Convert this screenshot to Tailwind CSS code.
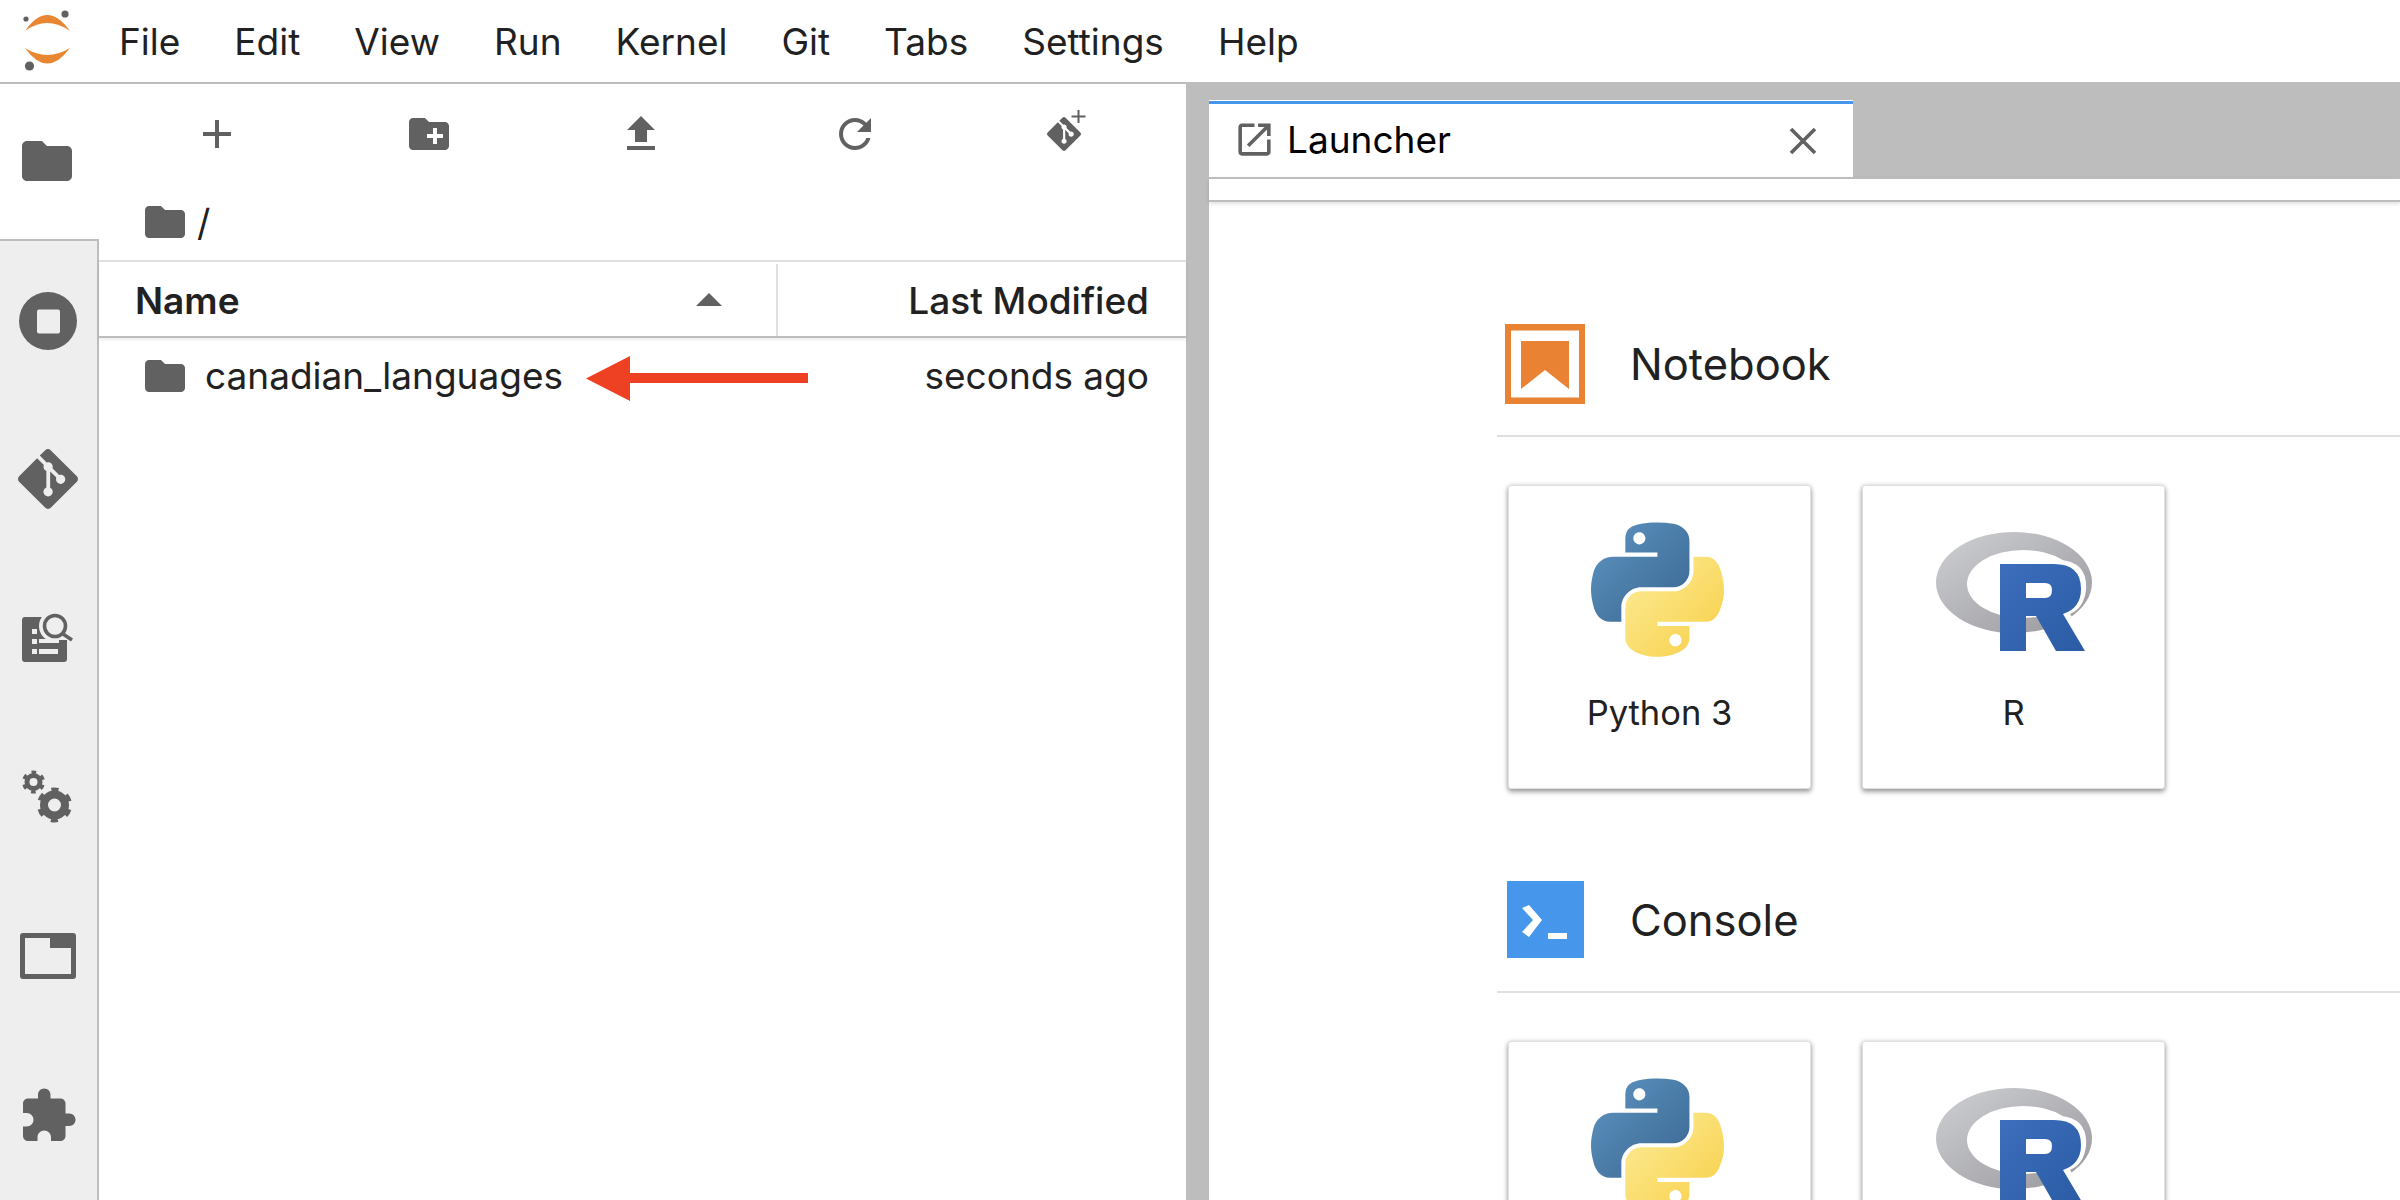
<!doctype html>
<html>
<head>
  <meta charset="UTF-8">
  <script src="https://cdn.jsdelivr.net/npm/@tailwindcss/browser@4"></script>
</head>
<body class="w-[2400px] h-[1200px] overflow-hidden bg-white text-[#212121] font-['Inter',sans-serif]">
  <svg class="absolute w-0 h-0">
    <defs>
      <linearGradient id="py-blue" x1="0" y1="0" x2="1" y2="1"><stop offset="0" stop-color="#5f94c2"/><stop offset="1" stop-color="#386690"/></linearGradient>
      <linearGradient id="py-yellow" x1="0" y1="0" x2="1" y2="1"><stop offset="0" stop-color="#fcec9a"/><stop offset="1" stop-color="#f8cf45"/></linearGradient>
      <linearGradient id="r-ring" x1="0" y1="0" x2="1" y2="1"><stop offset="0" stop-color="#cfd0d3"/><stop offset="1" stop-color="#97979c"/></linearGradient>
      <linearGradient id="r-letter" x1="0" y1="0" x2="1" y2="1"><stop offset="0" stop-color="#3c6ebd"/><stop offset="1" stop-color="#2a5ba3"/></linearGradient>
      <symbol id="py-logo" viewBox="0 0 112 113">
        <path fill="url(#py-blue)" fill-rule="evenodd" d="M54.92 0C50.34.02 45.96.41 42.11 1.09 30.76 3.1 28.7 7.29 28.7 15.03V25.25H55.51V28.66H18.64C10.85 28.66 4.02 33.34 1.89 42.25-.57 52.46-.68 58.84 1.89 69.5 3.79 77.44 8.35 83.09 16.14 83.09H25.36V70.84C25.36 61.99 33.01 54.19 42.11 54.19H68.89C76.34 54.19 82.29 48.05 82.29 40.56V15.03C82.29 7.77 76.16 2.31 68.89 1.09 64.28.33 59.5-.02 54.92 0ZM40.42 8.22C43.19 8.22 45.45 10.52 45.45 13.34 45.45 16.16 43.19 18.44 40.42 18.44 37.64 18.44 35.39 16.16 35.39 13.34 35.39 10.52 37.64 8.22 40.42 8.22Z"/>
        <path fill="url(#py-yellow)" fill-rule="evenodd" d="M85.64 28.66V40.56C85.64 49.79 77.81 57.56 68.89 57.56H42.11C34.77 57.56 28.7 63.84 28.7 71.19V96.72C28.7 103.99 35.02 108.26 42.11 110.34 50.59 112.84 58.73 113.29 68.89 110.34 75.64 108.39 82.29 104.46 82.29 96.72V86.5H55.51V83.09H95.7C103.49 83.09 106.4 77.66 109.11 69.5 111.91 61.1 111.79 53.03 109.11 42.25 107.18 34.49 103.5 28.66 95.7 28.66ZM70.58 93.31C73.35 93.31 75.61 95.59 75.61 98.41 75.61 101.23 73.35 103.53 70.58 103.53 67.81 103.53 65.54 101.23 65.54 98.41 65.54 95.59 67.81 93.31 70.58 93.31Z"/>
      </symbol>
      <symbol id="r-logo" viewBox="0 0 156 119">
        <path fill="url(#r-ring)" fill-rule="evenodd" d="M0 50.5A78 50.5 0 1 0 156 50.5 78 50.5 0 1 0 0 50.5ZM31 52A56 34 0 1 1 143 52 56 34 0 1 1 31 52Z"/>
        <path fill="#fff" d="M90 28H124Q152 30 150 58 148 76 134 82L150 104H120L100 84H90Z"/>
        <path fill="url(#r-letter)" fill-rule="evenodd" d="M64 32H118Q145 32 145 57 145 76 127 82L149 119H120L100 84H90V119H64ZM90 51V66H109Q116 66 116 58 116 51 109 51Z"/>
      </symbol>
      <symbol id="folder" viewBox="0 0 24 24"><path d="M10 4H4c-1.1 0-1.99.9-1.99 2L2 18c0 1.1.9 2 2 2h16c1.1 0 2-.9 2-2V8c0-1.1-.9-2-2-2h-8l-2-2z"/></symbol>
      <symbol id="git" viewBox="0 0 24 24"><path d="M23.546 10.93L13.067.452c-.604-.603-1.582-.603-2.188 0L8.708 2.627l2.76 2.76c.645-.215 1.379-.07 1.889.441.516.515.658 1.258.438 1.9l2.658 2.66c.645-.223 1.387-.078 1.9.435.721.72.721 1.884 0 2.604-.719.719-1.881.719-2.6 0-.539-.541-.674-1.337-.404-1.996L12.86 8.955v6.525c.176.086.342.203.488.348.713.721.713 1.883 0 2.6-.719.721-1.889.721-2.609 0-.719-.719-.719-1.879 0-2.598.182-.18.387-.316.605-.406V8.835c-.217-.091-.424-.222-.6-.401-.545-.545-.676-1.342-.396-2.009L7.636 3.7.45 10.881c-.6.605-.6 1.584 0 2.189l10.48 10.477c.604.604 1.582.604 2.186 0l10.43-10.43c.605-.603.605-1.582 0-2.187"/></symbol>
    </defs>
  </svg>

  <!-- menu bar -->
  <header class="h-[84px] border-b-2 border-[#bdbdbd] flex items-center">
    <div class="w-[92px] h-[82px] shrink-0">
      <svg width="92" height="82" viewBox="0 0 92 82">
        <path fill="#e98632" d="M25 31Q47 -1 70 31 47 15 25 31Z"/>
        <path fill="#e98632" d="M25 48Q47 62 70 48 47 79 25 48Z"/>
        <circle cx="65" cy="14" r="3.6" fill="#616161"/>
        <circle cx="26" cy="19" r="2.6" fill="#616161"/>
        <circle cx="29.5" cy="66" r="4.6" fill="#616161"/>
      </svg>
    </div>
    <nav class="flex text-[37px] leading-none">
      <span class="px-[27px]">File</span>
      <span class="px-[27px]">Edit</span>
      <span class="px-[27px]">View</span>
      <span class="px-[27px]">Run</span>
      <span class="px-[27px]">Kernel</span>
      <span class="px-[27px]">Git</span>
      <span class="px-[27px]">Tabs</span>
      <span class="px-[27px]">Settings</span>
      <span class="px-[27px]">Help</span>
    </nav>
  </header>

  <main class="flex h-[1116px] overflow-hidden">
    <!-- activity bar -->
    <aside class="w-[99px] shrink-0 flex flex-col">
      <div class="h-[155px] shrink-0 flex items-center justify-center bg-white border-b-2 border-[#bdbdbd] box-content">
        <svg class="w-[60px] h-[60px] mr-[5px] mt-[-2px] fill-[#616161]"><use href="#folder"/></svg>
      </div>
      <div class="flex-1 bg-[#eeeeee] border-r-2 border-[#bdbdbd] flex flex-col">
        <div class="h-[160px] flex items-center justify-center">
          <svg width="58" height="58" viewBox="0 0 58 58" class="mr-[2px] mt-[-1px]"><circle cx="29" cy="29" r="29" fill="#616161"/><rect x="18" y="17.5" width="23" height="24" rx="2" fill="#eeeeee"/></svg>
        </div>
        <div class="h-[159px] flex items-center justify-center">
          <svg class="w-[60px] h-[60px] mr-[2px] mt-[-3px] fill-[#616161]"><use href="#git"/></svg>
        </div>
        <div class="h-[159px] flex items-center justify-center">
          <svg width="51" height="50" viewBox="0 0 51 50" class="mr-[2px] mt-[-5px]">
            <rect x="0" y="5" width="45" height="45" rx="3" fill="#616161"/>
            <circle cx="33" cy="14" r="16" fill="#eeeeee"/>
            <rect x="37" y="24" width="14" height="9" fill="#eeeeee"/>
            <path d="M36 28 H45 V33 H36Z" fill="#616161"/>
            <circle cx="33" cy="14" r="10.5" fill="none" stroke="#616161" stroke-width="3.6"/>
            <path d="M41 22L50 28" stroke="#616161" stroke-width="3.6" fill="none"/>
            <path d="M10 17h5v5h-5zM10 27h5v5h-5zM10 37h5v5h-5zM17 27h20v4H17zM17 37h19v5H17z" fill="#eeeeee"/>
          </svg>
        </div>
        <div class="h-[159px] flex items-center justify-center">
          <svg width="52" height="54" viewBox="0 0 52 54" fill="none" stroke="#616161" class="mr-[2px] mt-[-4px]">
            <circle cx="11.5" cy="12" r="6.5" stroke-width="5"/>
            <circle cx="11.5" cy="12" r="9.7" stroke-width="3.6" stroke-dasharray="4.6 5.56" stroke-dashoffset="-2.8"/>
            <circle cx="32.5" cy="35" r="10.5" stroke-width="8"/>
            <circle cx="32.5" cy="35" r="15" stroke-width="5" stroke-dasharray="7 8.7" stroke-dashoffset="-4.35"/>
          </svg>
        </div>
        <div class="h-[159px] flex items-center justify-center">
          <svg width="56" height="46" viewBox="0 0 56 46" class="mr-[2px] mt-[-4px]"><path fill="#616161" fill-rule="evenodd" d="M3 0H53Q56 0 56 3V43Q56 46 53 46H3Q0 46 0 43V3Q0 0 3 0ZM5 5V41H51V15H30V5Z"/></svg>
        </div>
        <div class="h-[159px] flex items-center justify-center">
          <svg class="w-[60px] h-[60px] mr-[2px] mt-[-2px] fill-[#616161]" viewBox="0 0 24 24"><path d="M20.5 11H19V7c0-1.1-.9-2-2-2h-4V3.5C13 2.12 11.88 1 10.5 1S8 2.12 8 3.5V5H4c-1.1 0-1.99.9-1.99 2v3.8H3.5c1.49 0 2.7 1.21 2.7 2.7s-1.21 2.7-2.7 2.7H2V20c0 1.1.9 2 2 2h3.8v-1.5c0-1.49 1.21-2.7 2.7-2.7 1.49 0 2.7 1.21 2.7 2.7V22H17c1.1 0 2-.9 2-2v-4h1.5c1.38 0 2.5-1.12 2.5-2.5S21.88 11 20.5 11z"/></svg>
        </div>
      </div>
    </aside>

    <!-- file browser -->
    <section class="relative w-[1087px] shrink-0 flex flex-col">
      <div class="h-[100px] pl-[12px] flex items-center fill-[#616161]">
        <div class="w-[212px] flex justify-center"><svg class="w-12 h-12" viewBox="0 0 24 24"><path d="M19 13h-6v6h-2v-6H5v-2h6V5h2v6h6v2z"/></svg></div>
        <div class="w-[212px] flex justify-center"><svg class="w-12 h-12" viewBox="0 0 24 24"><path d="M20 6h-8l-2-2H4c-1.11 0-1.99.89-1.99 2L2 18c0 1.11.89 2 2 2h16c1.11 0 2-.89 2-2V8c0-1.11-.89-2-2-2zm-1 8h-3v3h-2v-3h-3v-2h3V9h2v3h3v2z"/></svg></div>
        <div class="w-[212px] flex justify-center"><svg class="w-12 h-12" viewBox="0 0 24 24"><path d="M9 16h6v-6h4l-7-7-7 7h4zm-4 2h14v2H5z"/></svg></div>
        <div class="w-[212px] flex justify-center"><svg class="w-12 h-12 ml-[3px]" viewBox="0 0 24 24"><path d="M17.65 6.35C16.2 4.9 14.21 4 12 4c-4.42 0-7.99 3.58-7.99 8s3.57 8 7.99 8c3.73 0 6.84-2.55 7.73-6h-2.08c-.82 2.33-3.04 4-5.65 4-3.31 0-6-2.69-6-6s2.69-6 6-6c1.66 0 3.14.69 4.22 1.78L13 11h7V4l-2.35 2.35z"/></svg></div>
        <div class="w-[212px] flex justify-center">
          <svg class="w-12 h-12 ml-[6px]" viewBox="0 0 48 48">
            <svg x="3" y="7" width="34" height="34" viewBox="0 0 24 24"><path d="M23.546 10.93L13.067.452c-.604-.603-1.582-.603-2.188 0L8.708 2.627l2.76 2.76c.645-.215 1.379-.07 1.889.441.516.515.658 1.258.438 1.9l2.658 2.66c.645-.223 1.387-.078 1.9.435.721.72.721 1.884 0 2.604-.719.719-1.881.719-2.6 0-.539-.541-.674-1.337-.404-1.996L12.86 8.955v6.525c.176.086.342.203.488.348.713.721.713 1.883 0 2.6-.719.721-1.889.721-2.609 0-.719-.719-.719-1.879 0-2.598.182-.18.387-.316.605-.406V8.835c-.217-.091-.424-.222-.6-.401-.545-.545-.676-1.342-.396-2.009L7.636 3.7.45 10.881c-.6.605-.6 1.584 0 2.189l10.48 10.477c.604.604 1.582.604 2.186 0l10.43-10.43c.605-.603.605-1.582 0-2.187"/></svg>
            <path d="M34.5 0h2v5.5h6v2h-6V13h-2V7.5h-6v-2h6z" transform="translate(-1 0)"/>
          </svg>
        </div>
      </div>
      <div class="h-[76px] pl-[42px] flex items-center gap-[14px] border-b-2 border-[#e0e0e0] box-content">
        <svg class="w-12 h-12 fill-[#616161] shrink-0"><use href="#folder"/></svg>
        <span class="text-[37px] leading-none ml-[-6px]">/</span>
      </div>
      <div class="h-[76px] flex items-stretch border-b-2 border-[#bdbdbd] shadow-[0_2px_3px_rgba(0,0,0,0.08)] text-[37px]">
        <div class="w-[677px] pl-[36px] pr-[54px] pt-[3px] flex items-center justify-between font-semibold">
          <span>Name</span>
          <svg width="26" height="13" viewBox="0 0 26 13" class="mt-[-3px]"><path d="M13 0L26 13H0Z" fill="#616161"/></svg>
        </div>
        <div class="flex-1 mt-[2px] border-l-2 border-[#e0e0e0] pr-[37px] pt-[1px] flex items-center justify-end font-medium">Last Modified</div>
      </div>
      <div class="h-[76px] pl-[42px] pr-[37px] flex items-center text-[37px]">
        <svg class="w-12 h-12 fill-[#616161] shrink-0"><use href="#folder"/></svg>
        <span class="ml-[16px]">canadian_languages</span>
        <span class="ml-auto">seconds ago</span>
      </div>
      <!-- red annotation arrow -->
      <svg class="absolute left-[487px] top-[272px]" width="224" height="45" viewBox="0 0 224 45"><path d="M0 22.5L44 0V17H222V27H44V45Z" fill="#ee4123"/></svg>
    </section>

    <div class="w-[23px] shrink-0 bg-[#bdbdbd]"></div>

    <!-- launcher -->
    <section class="flex-1 flex flex-col min-w-0">
      <div class="h-[93px] shrink-0 bg-[#bdbdbd] pt-[17px] flex">
        <div class="w-[644px] h-[76px] bg-white border-t-[3px] border-[#4696ec] shadow-[0_-1px_0_#fff] flex items-center pl-[24px] pr-[34px]">
          <svg class="w-[43px] h-[43px] mt-[-2px] fill-[#616161] shrink-0" viewBox="0 0 24 24"><path d="M19 19H5V5h7V3H5c-1.11 0-2 .9-2 2v14c0 1.1.89 2 2 2h14c1.1 0 2-.9 2-2v-7h-2v7zM14 3v2h3.59l-9.83 9.83 1.41 1.41L19 6.41V10h2V3h-7z"/></svg>
          <span class="ml-[11px] mt-[-2px] text-[37px] leading-none text-black">Launcher</span>
          <svg class="ml-auto mr-[2px]" width="28" height="28" viewBox="0 0 28 28"><path d="M2 2L26 26M26 2L2 26" stroke="#616161" stroke-width="3.6" fill="none"/></svg>
        </div>
      </div>
      <div class="h-[25px] shrink-0 border-t-2 border-b-2 border-[#bdbdbd] shadow-[0_2px_4px_rgba(0,0,0,0.12)]"></div>

      <div class="pl-[288px] pt-[122px]">
        <div class="flex items-center h-[80px] pl-[8px]">
          <svg width="80" height="80" viewBox="0 0 80 80"><path fill="#e98232" fill-rule="evenodd" d="M0 0H80V80H0ZM6 6.5V73.5H74V6.5Z"/><path fill="#e98232" d="M16 17H64V65L40 46 16 65Z"/></svg>
          <span class="ml-[45px] mt-[2px] text-[43.5px] leading-none">Notebook</span>
        </div>
        <div class="mt-[31px] h-[2px] bg-[#e0e0e0]"></div>
        <div class="mt-[48px] ml-[11px] flex gap-[51px]">
          <div class="w-[303px] h-[304px] bg-white border border-[#e0e0e0] rounded-[3px] shadow-[0_3px_5px_rgba(0,0,0,0.35),0_0_5px_rgba(0,0,0,0.15)] flex flex-col items-center">
            <svg class="w-[134px] h-[136px] mt-[36px] ml-[-4px]"><use href="#py-logo"/></svg>
            <span class="mt-[38px] text-[34.5px] leading-none">Python 3</span>
          </div>
          <div class="w-[303px] h-[304px] bg-white border border-[#e0e0e0] rounded-[3px] shadow-[0_3px_5px_rgba(0,0,0,0.35),0_0_5px_rgba(0,0,0,0.15)] flex flex-col items-center">
            <svg class="w-[156px] h-[119px] mt-[46px] ml-[1px]"><use href="#r-logo"/></svg>
            <span class="mt-[45px] text-[34.5px] leading-none">R</span>
          </div>
        </div>
        <div class="mt-[92px] flex items-center h-[77px] pl-[10px]">
          <svg width="77" height="77" viewBox="0 0 77 77"><rect width="77" height="77" fill="#4696ec"/><path fill="#fff" d="M15 27L22 24 35 39 22 56 15 51 26 39Z"/><rect x="41" y="52" width="19" height="6" fill="#fff"/></svg>
          <span class="ml-[46px] mt-[2px] text-[43.5px] leading-none">Console</span>
        </div>
        <div class="mt-[33px] h-[2px] bg-[#e0e0e0]"></div>
        <div class="mt-[48px] ml-[11px] flex gap-[51px]">
          <div class="w-[303px] h-[304px] bg-white border border-[#e0e0e0] rounded-[3px] shadow-[0_3px_5px_rgba(0,0,0,0.35),0_0_5px_rgba(0,0,0,0.15)] flex flex-col items-center">
            <svg class="w-[134px] h-[136px] mt-[36px] ml-[-4px]"><use href="#py-logo"/></svg>
          </div>
          <div class="w-[303px] h-[304px] bg-white border border-[#e0e0e0] rounded-[3px] shadow-[0_3px_5px_rgba(0,0,0,0.35),0_0_5px_rgba(0,0,0,0.15)] flex flex-col items-center">
            <svg class="w-[156px] h-[119px] mt-[46px] ml-[1px]"><use href="#r-logo"/></svg>
          </div>
        </div>
      </div>
    </section>
  </main>
</body>
</html>
